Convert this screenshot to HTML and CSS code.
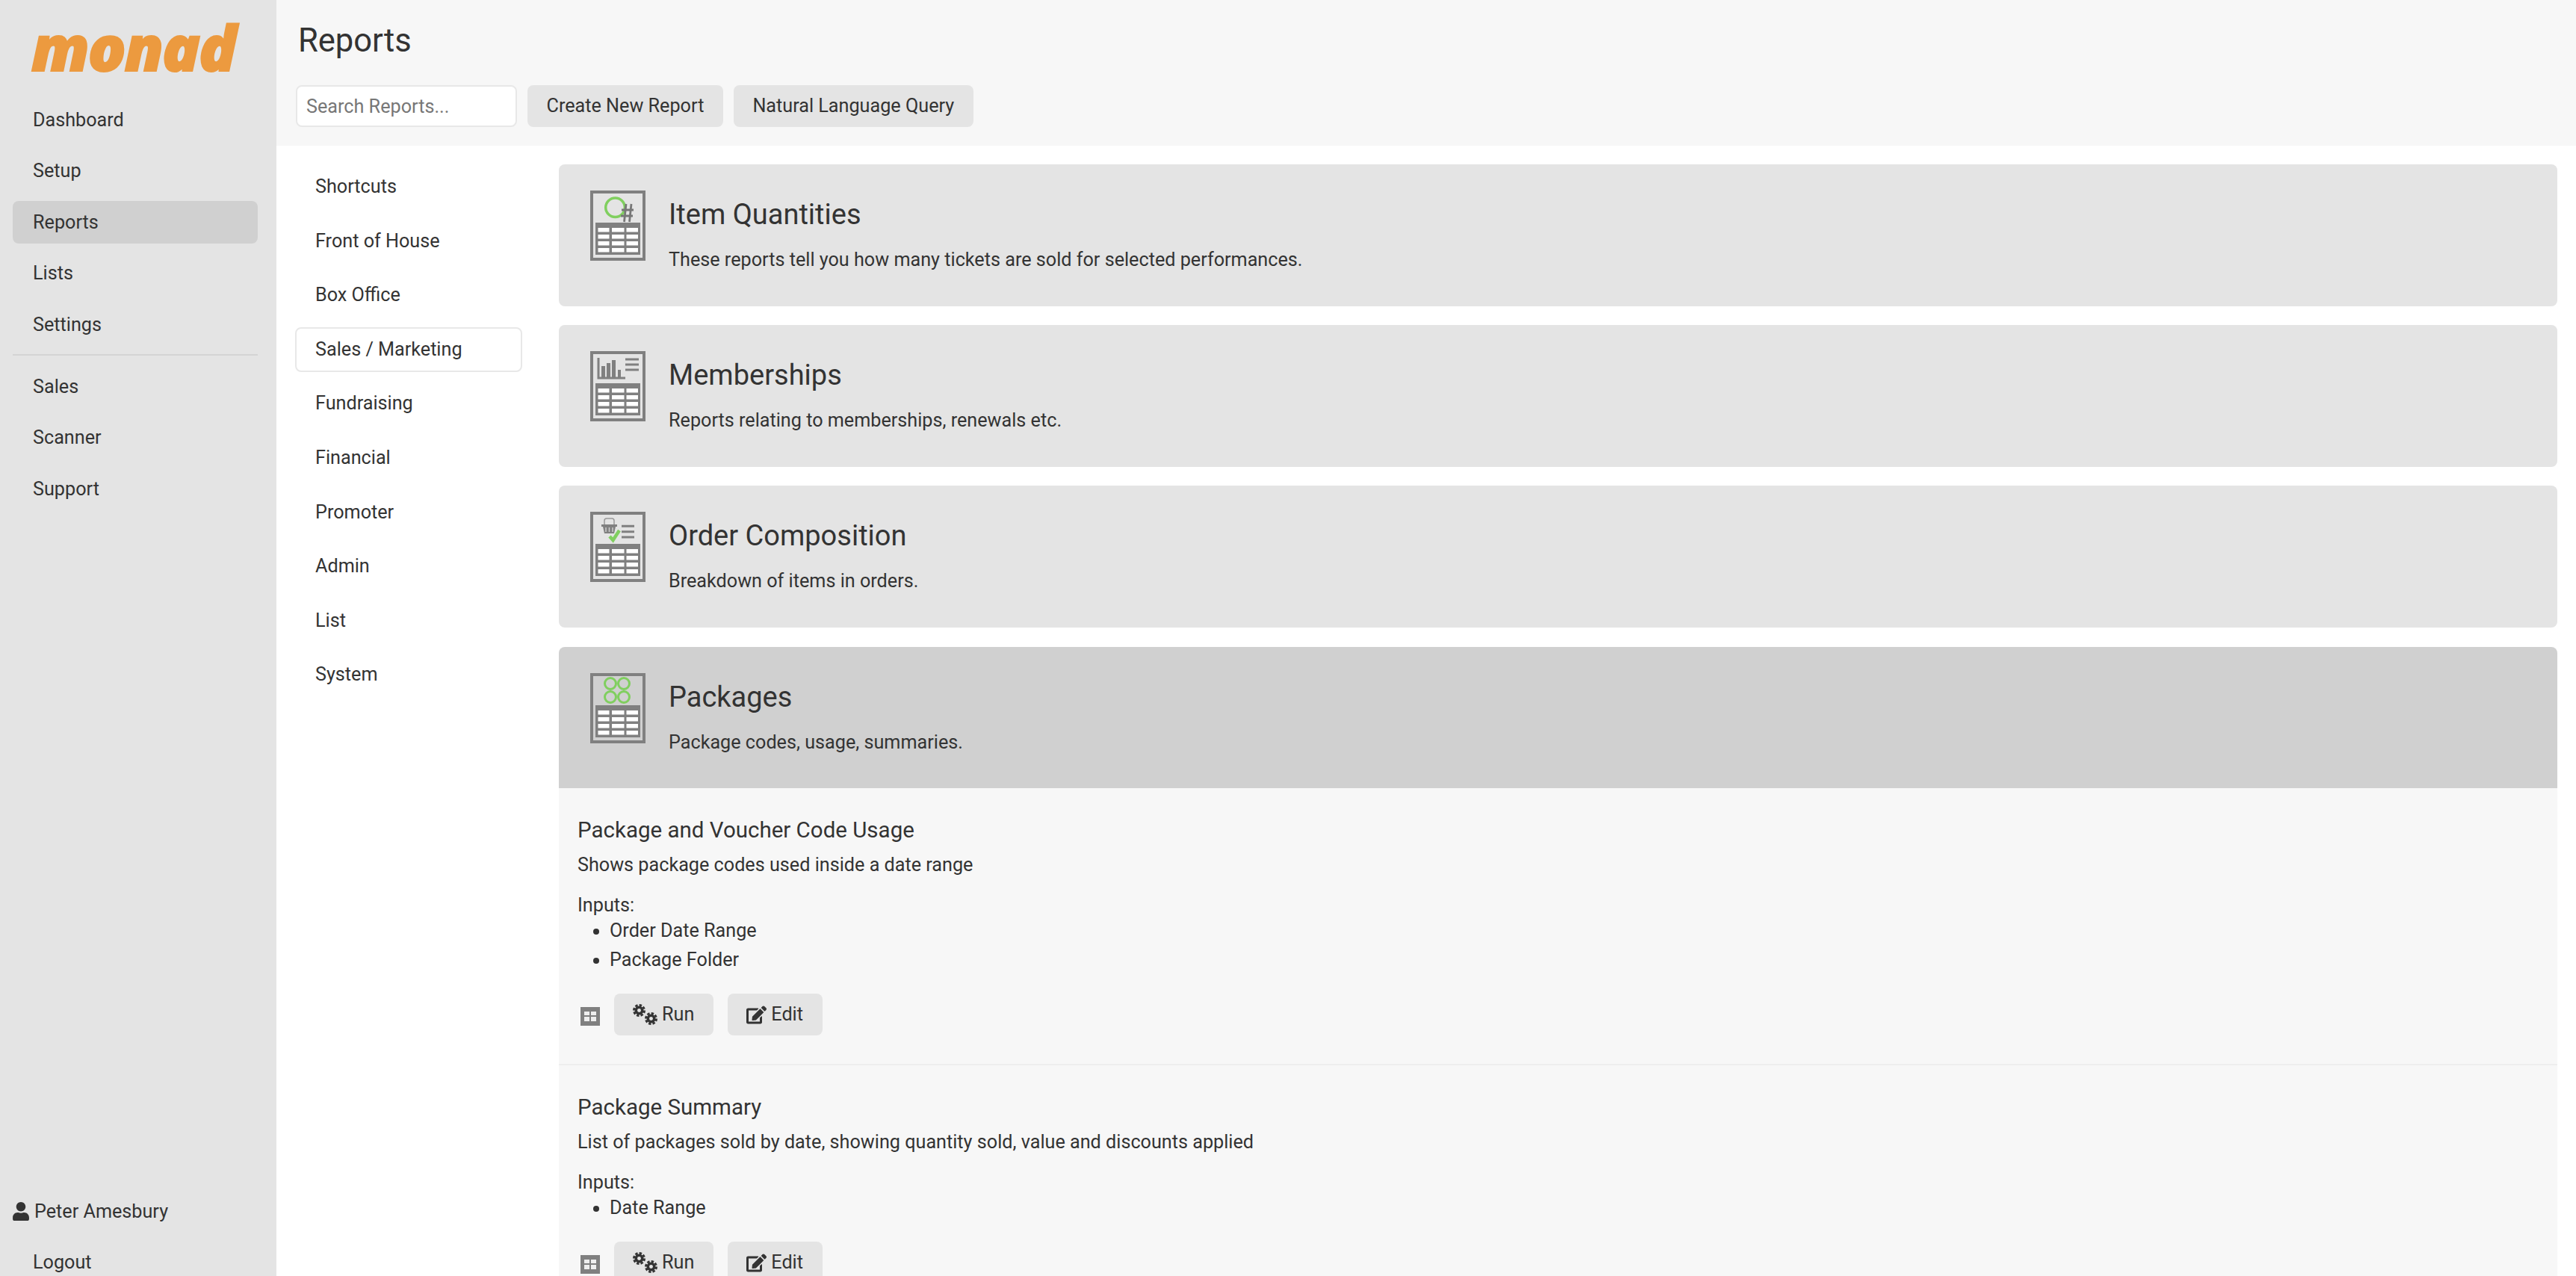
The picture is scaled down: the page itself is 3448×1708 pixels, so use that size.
FILE: index.html
```html
<!DOCTYPE html>
<html lang="en">
<head>
    <meta charset="UTF-8">
    <title>Reports</title>
    <link rel="stylesheet" href="styles.css">
</head>
<body>
    <!-- Shared icon parts -->
    <svg class="defs" width="0" height="0">
        <symbol id="sheet" viewBox="0 0 74 94">
            <rect x="2" y="2" width="70" height="90" fill="none" stroke="#808080" stroke-width="4"/>
            <rect x="7" y="43" width="60" height="43" fill="#808080"/>
            <g fill="#fff">
                <rect x="10.5" y="50" width="15" height="5.5"/><rect x="29" y="50" width="16.5" height="5.5"/><rect x="48.5" y="50" width="15.5" height="5.5"/>
                <rect x="10.5" y="59" width="15" height="5.5"/><rect x="29" y="59" width="16.5" height="5.5"/><rect x="48.5" y="59" width="15.5" height="5.5"/>
                <rect x="10.5" y="68" width="15" height="5.5"/><rect x="29" y="68" width="16.5" height="5.5"/><rect x="48.5" y="68" width="15.5" height="5.5"/>
                <rect x="10.5" y="77" width="15" height="5.5"/><rect x="29" y="77" width="16.5" height="5.5"/><rect x="48.5" y="77" width="15.5" height="5.5"/>
            </g>
        </symbol>
        <symbol id="gear" viewBox="0 0 24 24">
            <circle cx="12" cy="12" r="6" fill="none" stroke="#333" stroke-width="5"/>
            <circle cx="12" cy="12" r="10" fill="none" stroke="#333" stroke-width="4" stroke-dasharray="4.85 2.99"/>
        </symbol>
    </svg>

    <div class="app">
        <aside class="sidebar">
            <div class="logo">monad</div>
            <nav class="side-nav">
                <a href="#">Dashboard</a>
                <a href="#">Setup</a>
                <a href="#" class="active">Reports</a>
                <a href="#">Lists</a>
                <a href="#">Settings</a>
                <hr>
                <a href="#">Sales</a>
                <a href="#">Scanner</a>
                <a href="#">Support</a>
            </nav>
            <div class="side-user">
                <div class="user-name">
                    <svg viewBox="0 0 448 512"><path fill="#333" d="M224 256c70.7 0 128-57.3 128-128S294.7 0 224 0 96 57.3 96 128s57.3 128 128 128zm89.6 32h-16.7c-22.2 10.2-46.9 16-72.9 16s-50.6-5.8-72.9-16h-16.7C60.2 288 0 348.2 0 422.4V464c0 26.5 21.5 48 48 48h352c26.5 0 48-21.5 48-48v-41.6c0-74.2-60.2-134.4-134.4-134.4z"/></svg>
                    Peter Amesbury
                </div>
                <a href="#">Logout</a>
            </div>
        </aside>

        <main class="main">
            <header class="page-head">
                <h1>Reports</h1>
                <div class="toolbar">
                    <input type="text" class="search" placeholder="Search Reports...">
                    <button class="btn">Create New Report</button>
                    <button class="btn">Natural Language Query</button>
                </div>
            </header>

            <div class="content">
                <nav class="cat-nav">
                    <a href="#">Shortcuts</a>
                    <a href="#">Front of House</a>
                    <a href="#">Box Office</a>
                    <a href="#" class="active">Sales / Marketing</a>
                    <a href="#">Fundraising</a>
                    <a href="#">Financial</a>
                    <a href="#">Promoter</a>
                    <a href="#">Admin</a>
                    <a href="#">List</a>
                    <a href="#">System</a>
                </nav>

                <section class="report-groups">
                    <div class="group">
                        <svg class="group-icon" viewBox="0 0 74 94">
                            <use href="#sheet" width="74" height="94"/>
                            <circle cx="33.500" cy="22.800" r="12.800" fill="none" stroke="#80cf5f" stroke-width="3.500"/>
                            <path d="M48 18 L45.500 42 M55 18 L52.500 42 M42 26 H58 M41 34 H57" fill="none" stroke="#777" stroke-width="2.800"/>
                        </svg>
                        <div>
                            <h2>Item Quantities</h2>
                            <p>These reports tell you how many tickets are sold for selected performances.</p>
                        </div>
                    </div>

                    <div class="group">
                        <svg class="group-icon" viewBox="0 0 74 94">
                            <use href="#sheet" width="74" height="94"/>
                            <path d="M11 9 V36 H47" fill="none" stroke="#808080" stroke-width="3"/>
                            <path d="M15 20h5v15h-5zM22 16h5v19h-5zM29 12h5v23h-5zM37 25h4v10h-4z" fill="#808080"/>
                            <path d="M47 11 H65 M47 18 H65 M47 25 H65" stroke="#808080" stroke-width="3"/>
                        </svg>
                        <div>
                            <h2>Memberships</h2>
                            <p>Reports relating to memberships, renewals etc.</p>
                        </div>
                    </div>

                    <div class="group">
                        <svg class="group-icon" viewBox="0 0 74 94">
                            <use href="#sheet" width="74" height="94"/>
                            <path d="M19 18 V12 Q19 9 22 9 H29 Q32 9 32 12 V18" fill="none" stroke="#999" stroke-width="1.5"/>
                            <path d="M15 17 H36 V20 H34 L32 29 H19 L17 20 H15 Z" fill="#808080"/>
                            <path d="M21 21v6M25.500 21v6M30 21v6" stroke="#ccc" stroke-width="1.500"/>
                            <path d="M26 33 L30.500 38 L39 25" fill="none" stroke="#80cf5f" stroke-width="4.500"/>
                            <path d="M42 19.300 H59 M42 26.700 H59 M42 34 H59" stroke="#808080" stroke-width="3"/>
                        </svg>
                        <div>
                            <h2>Order Composition</h2>
                            <p>Breakdown of items in orders.</p>
                        </div>
                    </div>

                    <div class="group open">
                        <svg class="group-icon" viewBox="0 0 74 94">
                            <use href="#sheet" width="74" height="94"/>
                            <g fill="none" stroke="#80cf5f" stroke-width="3">
                                <circle cx="27" cy="14" r="7.500"/><circle cx="45" cy="14" r="7.500"/>
                                <circle cx="27" cy="32" r="7.500"/><circle cx="45" cy="32" r="7.500"/>
                            </g>
                        </svg>
                        <div>
                            <h2>Packages</h2>
                            <p>Package codes, usage, summaries.</p>
                        </div>
                    </div>

                    <div class="report-list">
                        <article class="report">
                            <h3>Package and Voucher Code Usage</h3>
                            <p class="report-desc">Shows package codes used inside a date range</p>
                            <div class="inputs-label">Inputs:</div>
                            <ul>
                                <li>Order Date Range</li>
                                <li>Package Folder</li>
                            </ul>
                            <div class="report-actions">
                                <svg class="table-icon" viewBox="0 0 26 25"><path fill="#808080" d="M0 0h26v25H0z"/><path fill="#eee" d="M5 6h7v5H5zM14 6h7v5h-7zM5 13h7v6H5zM14 13h7v6h-7z"/></svg>
                                <button class="btn btn-small">
                                    <span class="cogs"><svg class="cog-a"><use href="#gear"/></svg><svg class="cog-b"><use href="#gear"/></svg></span>
                                    Run
                                </button>
                                <button class="btn btn-small">
                                    <svg class="edit-icon" viewBox="0 0 576 512"><path fill="#333" d="M402.6 83.2l90.2 90.2c3.8 3.8 3.8 10 0 13.8L274.4 405.6l-92.8 10.3c-12.4 1.4-22.9-9.1-21.5-21.5l10.3-92.8L388.8 83.2c3.8-3.8 10-3.8 13.8 0zm162-22.9l-48.8-48.8c-15.2-15.2-39.9-15.2-55.2 0l-35.4 35.4c-3.8 3.8-3.8 10 0 13.8l90.2 90.2c3.8 3.8 10 3.8 13.8 0l35.4-35.4c15.2-15.3 15.2-40 0-55.2zM384 346.2V448H64V128h229.8c3.2 0 6.2-1.3 8.5-3.5l40-40c7.6-7.6 2.2-20.5-8.5-20.5H48C21.5 64 0 85.5 0 112v352c0 26.5 21.5 48 48 48h352c26.5 0 48-21.5 48-48V306.2c0-10.7-12.9-16-20.5-8.5l-40 40c-2.2 2.3-3.5 5.3-3.5 8.5z"/></svg>
                                    Edit
                                </button>
                            </div>
                        </article>

                        <article class="report">
                            <h3>Package Summary</h3>
                            <p class="report-desc">List of packages sold by date, showing quantity sold, value and discounts applied</p>
                            <div class="inputs-label">Inputs:</div>
                            <ul>
                                <li>Date Range</li>
                            </ul>
                            <div class="report-actions">
                                <svg class="table-icon" viewBox="0 0 26 25"><path fill="#808080" d="M0 0h26v25H0z"/><path fill="#eee" d="M5 6h7v5H5zM14 6h7v5h-7zM5 13h7v6H5zM14 13h7v6h-7z"/></svg>
                                <button class="btn btn-small">
                                    <span class="cogs"><svg class="cog-a"><use href="#gear"/></svg><svg class="cog-b"><use href="#gear"/></svg></span>
                                    Run
                                </button>
                                <button class="btn btn-small">
                                    <svg class="edit-icon" viewBox="0 0 576 512"><path fill="#333" d="M402.6 83.2l90.2 90.2c3.8 3.8 3.8 10 0 13.8L274.4 405.6l-92.8 10.3c-12.4 1.4-22.9-9.1-21.5-21.5l10.3-92.8L388.8 83.2c3.8-3.8 10-3.8 13.8 0zm162-22.9l-48.8-48.8c-15.2-15.2-39.9-15.2-55.2 0l-35.4 35.4c-3.8 3.8-3.8 10 0 13.8l90.2 90.2c3.8 3.8 10 3.8 13.8 0l35.4-35.4c15.2-15.3 15.2-40 0-55.2zM384 346.2V448H64V128h229.8c3.2 0 6.2-1.3 8.5-3.5l40-40c7.6-7.6 2.2-20.5-8.5-20.5H48C21.5 64 0 85.5 0 112v352c0 26.5 21.5 48 48 48h352c26.5 0 48-21.5 48-48V306.2c0-10.7-12.9-16-20.5-8.5l-40 40c-2.2 2.3-3.5 5.3-3.5 8.5z"/></svg>
                                    Edit
                                </button>
                            </div>
                        </article>
                    </div>
                </section>
            </div>
        </main>
    </div>
</body>
</html>
```

FILE: styles.css
```css
* {
    box-sizing: border-box;
}

body {
    margin: 0;
    height: 100vh;
    overflow: hidden;
    font-family: Roboto, "Liberation Sans", sans-serif;
    font-size: 25.2px;
    line-height: 38px;
    color: #333;
    background: #fff;
}

a {
    color: inherit;
    text-decoration: none;
}

.defs {
    display: block;
    height: 0;
}

.app {
    display: flex;
    height: 1724px;
}

/* Left sidebar */
.sidebar {
    width: 370px;
    flex: none;
    display: flex;
    flex-direction: column;
    background: #e4e4e4;
    padding: 0 25px 0 17px;
}

.logo {
    height: 131.6px;
    padding: 8px 0 0 25px;
    font-family: "Open Sans", sans-serif;
    font-size: 84px;
    font-weight: 800;
    font-style: italic;
    line-height: 110px;
    letter-spacing: -2px;
    -webkit-text-stroke: 2px #ec9a3f;
    color: #ec9a3f;
}

.side-nav {
    display: flex;
    flex-direction: column;
}

.side-nav a {
    height: 57px;
    margin-bottom: 11.6px;
    padding: 0 27px;
    border-radius: 8px;
    line-height: 57px;
}

.side-nav a.active {
    background: #d0d0d0;
}

.side-nav hr {
    width: 100%;
    margin: -1px 0 13px;
    border: 0;
    border-top: 2px solid #d4d4d4;
}

.side-user {
    margin-top: auto;
}

.user-name {
    display: flex;
    align-items: center;
    gap: 7px;
    height: 57px;
    margin-bottom: 11px;
}

.user-name svg {
    width: 22px;
    height: 25px;
}

.side-user a {
    display: block;
    height: 57px;
    margin-bottom: 6px;
    padding-left: 27px;
    line-height: 57px;
}

/* Page */
.main {
    flex: 1;
    min-width: 0;
}

.page-head {
    height: 195px;
    padding: 25px 25px 0 26px;
    background: #f7f7f7;
}

.page-head h1 {
    margin: 0 0 29px 3px;
    font-size: 43.5px;
    font-weight: 400;
    line-height: 60px;
}

.toolbar {
    display: flex;
    gap: 14px;
}

.search {
    width: 296px;
    height: 56px;
    padding: 0 12px;
    border: 2px solid #e8e8e8;
    border-radius: 8px;
    background: #fff;
    font: inherit;
    color: #333;
}

.search::placeholder {
    color: #777;
}

.btn {
    height: 56px;
    padding: 0 25.5px;
    border: 0;
    border-radius: 8px;
    background: #e4e4e4;
    font: inherit;
    color: #333;
}

.content {
    display: flex;
    padding: 25px 25px 0;
}

/* Category list */
.cat-nav {
    width: 353px;
    flex: none;
    display: flex;
    flex-direction: column;
}

.cat-nav a {
    width: 304px;
    height: 60px;
    margin-bottom: 12.6px;
    padding: 0 25px;
    border: 2px solid transparent;
    border-radius: 8px;
    line-height: 55px;
}

.cat-nav a.active {
    border-color: #e8e8e8;
}

/* Report groups */
.report-groups {
    flex: 1;
    min-width: 0;
}

.group {
    display: flex;
    height: 189.5px;
    margin-bottom: 25.7px;
    padding: 35px 42px 0;
    gap: 31px;
    border-radius: 8px;
    background: #e4e4e4;
}

.group.open {
    margin-bottom: 0;
    border-radius: 8px 8px 0 0;
    background: #d0d0d0;
}

.group-icon {
    width: 74px;
    height: 94px;
    flex: none;
}

.group h2 {
    margin: 0 0 18px;
    padding-top: 8px;
    font-size: 38px;
    font-weight: 400;
    line-height: 48px;
}

.group p {
    margin: 0;
}

.report-list {
    background: #f7f7f7;
}

.report {
    padding: 36px 25px 38px;
    border-bottom: 2px solid #eee;
}

.report h3 {
    margin: 0 0 8px;
    font-size: 29.5px;
    font-weight: 400;
    line-height: 40px;
}

.report-desc {
    margin: 0 0 16px;
}

.report ul {
    margin: 1px 0 25px;
    padding-left: 43px;
}

.report li {
    height: 39px;
}

.inputs-label {
    height: 33px;
}

.report-actions {
    display: flex;
    align-items: center;
    gap: 19px;
    margin-left: 4px;
}

.table-icon {
    width: 26px;
    height: 25px;
    margin: 4px 0 0;
}

.btn-small {
    display: flex;
    align-items: center;
    gap: 6px;
    padding: 0 26px 0 25px;
}

.cogs {
    position: relative;
    width: 33px;
    height: 28px;
}

.cogs svg {
    position: absolute;
}

.cog-a {
    left: 0;
    top: 0;
    width: 17px;
    height: 17px;
}

.cog-b {
    right: 0;
    bottom: 0;
    width: 17px;
    height: 17px;
}

.edit-icon {
    width: 27px;
    height: 25px;
}
```
